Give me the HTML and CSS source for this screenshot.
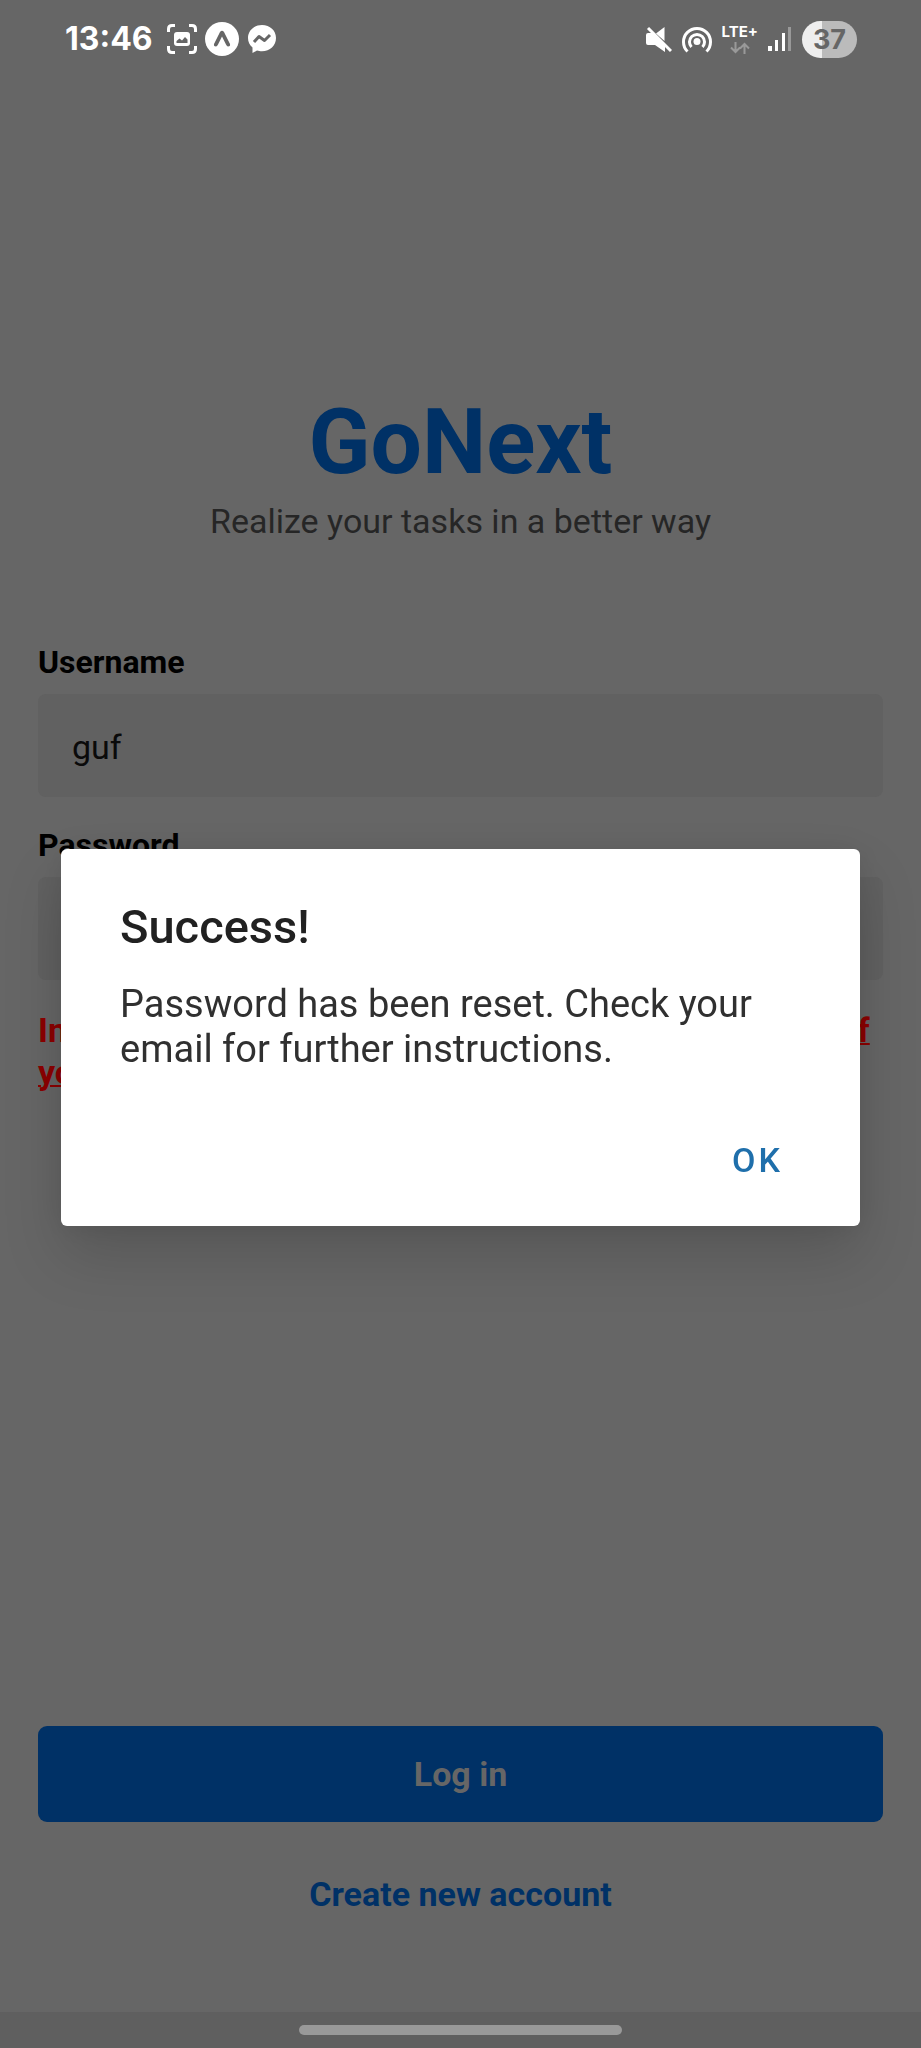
FILE: index.html
```html
<!DOCTYPE html>
<html lang="en">
<head>
<meta charset="utf-8">
<meta name="viewport" content="width=device-width, initial-scale=1">
<title>GoNext</title>
<link rel="stylesheet" href="styles.css">
</head>
<body>
<div class="screen">
  <header class="status">
    <div class="status-left">
      <time class="clock">13:46</time>
      <svg class="icon-capture" viewBox="0 0 30 30" aria-hidden="true">
        <path class="line" d="M1.500 8V5Q1.500 1.500 5 1.500H8M22 1.500H25Q28.500 1.500 28.500 5V8M28.500 22V25Q28.500 28.500 25 28.500H22M8 28.500H5Q1.500 28.500 1.500 25V22"/>
        <rect class="fill" x="7" y="8" width="16" height="14" rx="3"/>
        <path class="cut" d="M9.500 19V17L12.500 14.500L15 16.500L18 13L20.500 15.500V19Z"/>
      </svg>
      <svg class="icon-expo" viewBox="0 0 34 34" aria-hidden="true">
        <circle class="fill" cx="17" cy="17" r="17"/>
        <path class="cut" d="M15 10Q17 7.500 19 10L25 22Q25.500 24.500 23 24.500Q22 24.500 21 22.500L17 14.500L13 22.500Q12 24.500 11 24.500Q8.500 24.500 9 22Z"/>
      </svg>
      <svg class="icon-chat" viewBox="0 0 30 30" aria-hidden="true">
        <path class="fill" d="M15 1C7 1 1 6.500 1 14C1 18 2.500 21 5.500 23.500V29L10 26.500C11.500 27 13 27.200 15 27.200C23 27.200 29 21.500 29 14C29 6.500 23 1 15 1Z"/>
        <path class="cut-line" d="M7 18L12 12.500L17.500 16.500L23 11"/>
      </svg>
    </div>
    <div class="status-right">
      <svg class="icon-mute" viewBox="0 0 26 27" aria-hidden="true">
        <path class="fill" d="M0 9Q0 7 2 7H7L19 19V26L9 19H2Q0 19 0 17ZM10 7.500L18.500 1V15Z"/>
        <path class="line" d="M2 2L25 25"/>
      </svg>
      <svg class="icon-hotspot" viewBox="0 0 30 27" aria-hidden="true">
        <circle class="fill" cx="15" cy="15.500" r="3.500"/>
        <path class="line" d="M9.500 21A7.500 7.500 0 1 1 20.500 21M5.500 25.500A13.500 13.500 0 1 1 24.500 25.500"/>
      </svg>
      <div class="network">
        <span class="lte">LTE+</span>
        <svg class="icon-data" viewBox="0 0 20 12" aria-hidden="true">
          <path d="M5.500 0V10M1 5.500L5.500 10L10 5.500M14.500 12V2M10 6.500L14.500 2L19 6.500"/>
        </svg>
      </div>
      <svg class="icon-signal" viewBox="0 0 24 26" aria-hidden="true">
        <path class="fill" d="M0 20H4V25H0ZM7 14H10V25H7ZM14 7H17V25H14Z"/>
        <path class="dim" d="M20 1H23V25H20Z"/>
      </svg>
      <div class="battery">37</div>
    </div>
  </header>

  <main class="login">
    <h1 class="brand">GoNext</h1>
    <p class="tagline">Realize your tasks in a better way</p>
    <form class="form">
      <label class="label" for="username">Username</label>
      <input class="field" id="username" type="text" value="guf">
      <label class="label" for="password">Password</label>
      <input class="field" id="password" type="password">
      <p class="error">Incorrect username or password. <a class="reset" href="#">Press here to reset if<br>you forgot it.</a></p>
      <button class="submit" type="button">Log in</button>
      <a class="create" href="#">Create new account</a>
    </form>
  </main>

  <footer class="navbar"><div class="handle"></div></footer>
</div>

<div class="overlay">
  <section class="dialog" role="alertdialog" aria-labelledby="dialog-title" aria-describedby="dialog-text">
    <h2 class="dialog-title" id="dialog-title">Success!</h2>
    <p class="dialog-text" id="dialog-text">Password has been reset. Check your email for further instructions.</p>
    <div class="dialog-actions"><button class="ok" type="button">OK</button></div>
  </section>
</div>
</body>
</html>
```
FILE: styles.css
```css
* { box-sizing: border-box; margin: 0; }

body {
  background: #666;
  font-family: Roboto, "Liberation Sans", sans-serif;
  font-size: 34px;
  line-height: 40px;
}

.screen { min-height: 100vh; display: flex; flex-direction: column; }

/* Status bar */
.status {
  display: flex;
  justify-content: space-between;
  align-items: center;
  height: 78px;
  padding: 0 64px 0 65px;
  color: #fff;
}
.status-left, .status-right { display: flex; align-items: center; }
.status-left { gap: 8px; }
.status-right { gap: 10px; }
.clock { font: 700 32px/40px Inter, sans-serif; margin-right: 6px; }
.status svg { display: block; fill: none; }
.status .fill { fill: #fff; }
.status .dim { fill: #999; }
.status .cut { fill: #666; }
.status .line { stroke: #fff; stroke-width: 3; }
.status .cut-line { stroke: #666; stroke-width: 3; stroke-linejoin: round; }
.icon-capture, .icon-chat { width: 30px; height: 30px; }
.icon-expo { width: 34px; height: 34px; }
.icon-mute { width: 26px; height: 27px; }
.icon-hotspot { width: 30px; height: 27px; }
.network { display: flex; flex-direction: column; align-items: center; gap: 2px; }
.lte { font: 700 15px/16px Inter, sans-serif; }
.icon-data { width: 20px; height: 12px; stroke: #999; stroke-width: 2; }
.icon-signal { width: 24px; height: 26px; }
.battery {
  width: 55px;
  height: 37px;
  border-radius: 19px;
  background: linear-gradient(90deg, #eee 37%, #bbb 37%);
  color: #666;
  font: 700 27px/37px Inter, sans-serif;
  text-align: center;
}

/* Login page */
.login { flex: 1; display: flex; flex-direction: column; padding: 311px 38px 98px; }
.brand { color: #003166; font-size: 91px; line-height: 106px; text-align: center; }
.tagline { color: #262626; margin-top: 6px; text-align: center; }
.form { flex: 1; display: flex; flex-direction: column; margin-top: 102px; }
.label { font-size: 32px; font-weight: 700; line-height: 38px; margin-bottom: 13px; }
.field {
  width: 100%;
  height: 103px;
  margin-bottom: 29px;
  padding: 2px 34px 0;
  border: 0;
  border-radius: 8px;
  background: #616161;
  color: #0a0a0a;
  font: inherit;
}
.error { color: #8c0000; font-weight: 700; line-height: 42px; margin-bottom: 40px; }
.reset { color: inherit; text-decoration-thickness: 2px; }
.submit {
  height: 96px;
  margin-top: auto;
  border: 0;
  border-radius: 9px;
  background: #003166;
  color: #666;
  font: inherit;
  font-weight: 700;
}
.create {
  align-self: center;
  margin-top: 52px;
  color: #003166;
  font-weight: 700;
  text-decoration: none;
}

/* Gesture bar */
.navbar { display: flex; justify-content: center; padding: 13px 0; background: #5f5f5f; }
.handle { width: 35%; height: 10px; border-radius: 5px; background: #999; }

/* Alert */
.overlay {
  position: fixed;
  inset: 0;
  display: flex;
  align-items: center;
  padding: 27px 61px 0;
}
.dialog {
  width: 100%;
  padding: 51px 59px 30px;
  border-radius: 6px;
  background: #fff;
  box-shadow: 0 30px 60px rgba(0, 0, 0, 0.15), 0 0 30px rgba(0, 0, 0, 0.08);
}
.dialog-title { color: #212121; font-size: 47px; font-weight: 500; line-height: 54px; }
.dialog-text { color: #303030; font-size: 38px; line-height: 45px; margin-top: 28px; }
.dialog-actions { display: flex; justify-content: flex-end; margin-top: 52px; }
.ok {
  padding: 16px 18px;
  border: 0;
  background: none;
  color: #1f6fab;
  font: inherit;
  font-weight: 500;
  letter-spacing: 3px;
}
```
